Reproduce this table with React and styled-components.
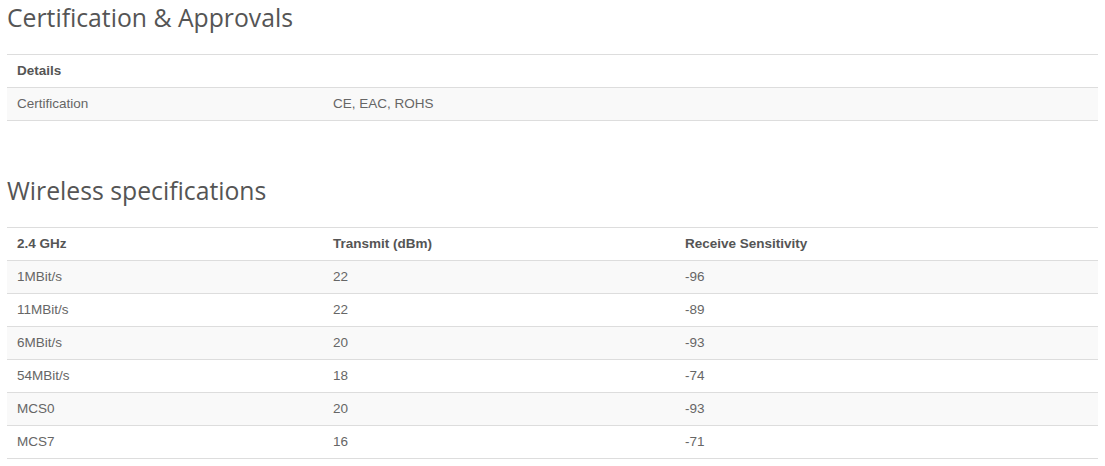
import React from "react";
import styled, { createGlobalStyle } from "styled-components";

const Global = createGlobalStyle`
  html, body { margin: 0; padding: 0; background: #fff; }
  body { font-family: "Liberation Sans", Arial, sans-serif; }
`;

const Page = styled.div`
  padding: 0 7px;
  display: flex;
  flex-direction: column;
`;

const Section = styled.section`
  display: flex;
  flex-direction: column;
  margin-bottom: ${(p) => p.$gap || 0}px;
`;

const Heading = styled.h2`
  margin: 0;
  padding: 4px 0 0 0;
  height: 54px;
  box-sizing: border-box;
  font-family: "Open Sans", sans-serif;
  font-weight: 400;
  font-size: 24.75px;
  line-height: 28px;
  color: #555;
`;

const Table = styled.table`
  width: 100%;
  border-collapse: collapse;
  table-layout: fixed;
  font-size: 13.5px;
  color: #666;
`;

const Row = styled.tr`
  background: ${(p) => (p.$striped ? "#f9f9f9" : "#fff")};
`;

const Th = styled.th`
  text-align: left;
  font-weight: 700;
  color: #555;
  padding: 8px 10px;
  line-height: 16px;
  border-top: 1px solid #ddd;
  border-bottom: 1px solid #ddd;
`;

const Td = styled.td`
  padding: 8px 10px;
  line-height: 16px;
  border-top: 1px solid #ddd;
  border-bottom: 1px solid #ddd;
`;

const wireless = [
  ["1MBit/s", "22", "-96"],
  ["11MBit/s", "22", "-89"],
  ["6MBit/s", "20", "-93"],
  ["54MBit/s", "18", "-74"],
  ["MCS0", "20", "-93"],
  ["MCS7", "16", "-71"],
];

export default function App() {
  return (
    <>
      <Global />
      <Page>
        <Section $gap={52}>
          <Heading>Certification &amp; Approvals</Heading>
          <Table>
            <colgroup>
              <col style={{ width: 316 }} />
              <col />
            </colgroup>
            <thead>
              <Row>
                <Th colSpan={2}>Details</Th>
              </Row>
            </thead>
            <tbody>
              <Row $striped>
                <Td>Certification</Td>
                <Td>CE, EAC, ROHS</Td>
              </Row>
            </tbody>
          </Table>
        </Section>
        <Section>
          <Heading>Wireless specifications</Heading>
          <Table>
            <colgroup>
              <col style={{ width: 316 }} />
              <col style={{ width: 352 }} />
              <col />
            </colgroup>
            <thead>
              <Row>
                <Th>2.4 GHz</Th>
                <Th>Transmit (dBm)</Th>
                <Th>Receive Sensitivity</Th>
              </Row>
            </thead>
            <tbody>
              {wireless.map((r, i) => (
                <Row key={r[0]} $striped={i % 2 === 0}>
                  <Td>{r[0]}</Td>
                  <Td>{r[1]}</Td>
                  <Td>{r[2]}</Td>
                </Row>
              ))}
            </tbody>
          </Table>
        </Section>
      </Page>
    </>
  );
}
